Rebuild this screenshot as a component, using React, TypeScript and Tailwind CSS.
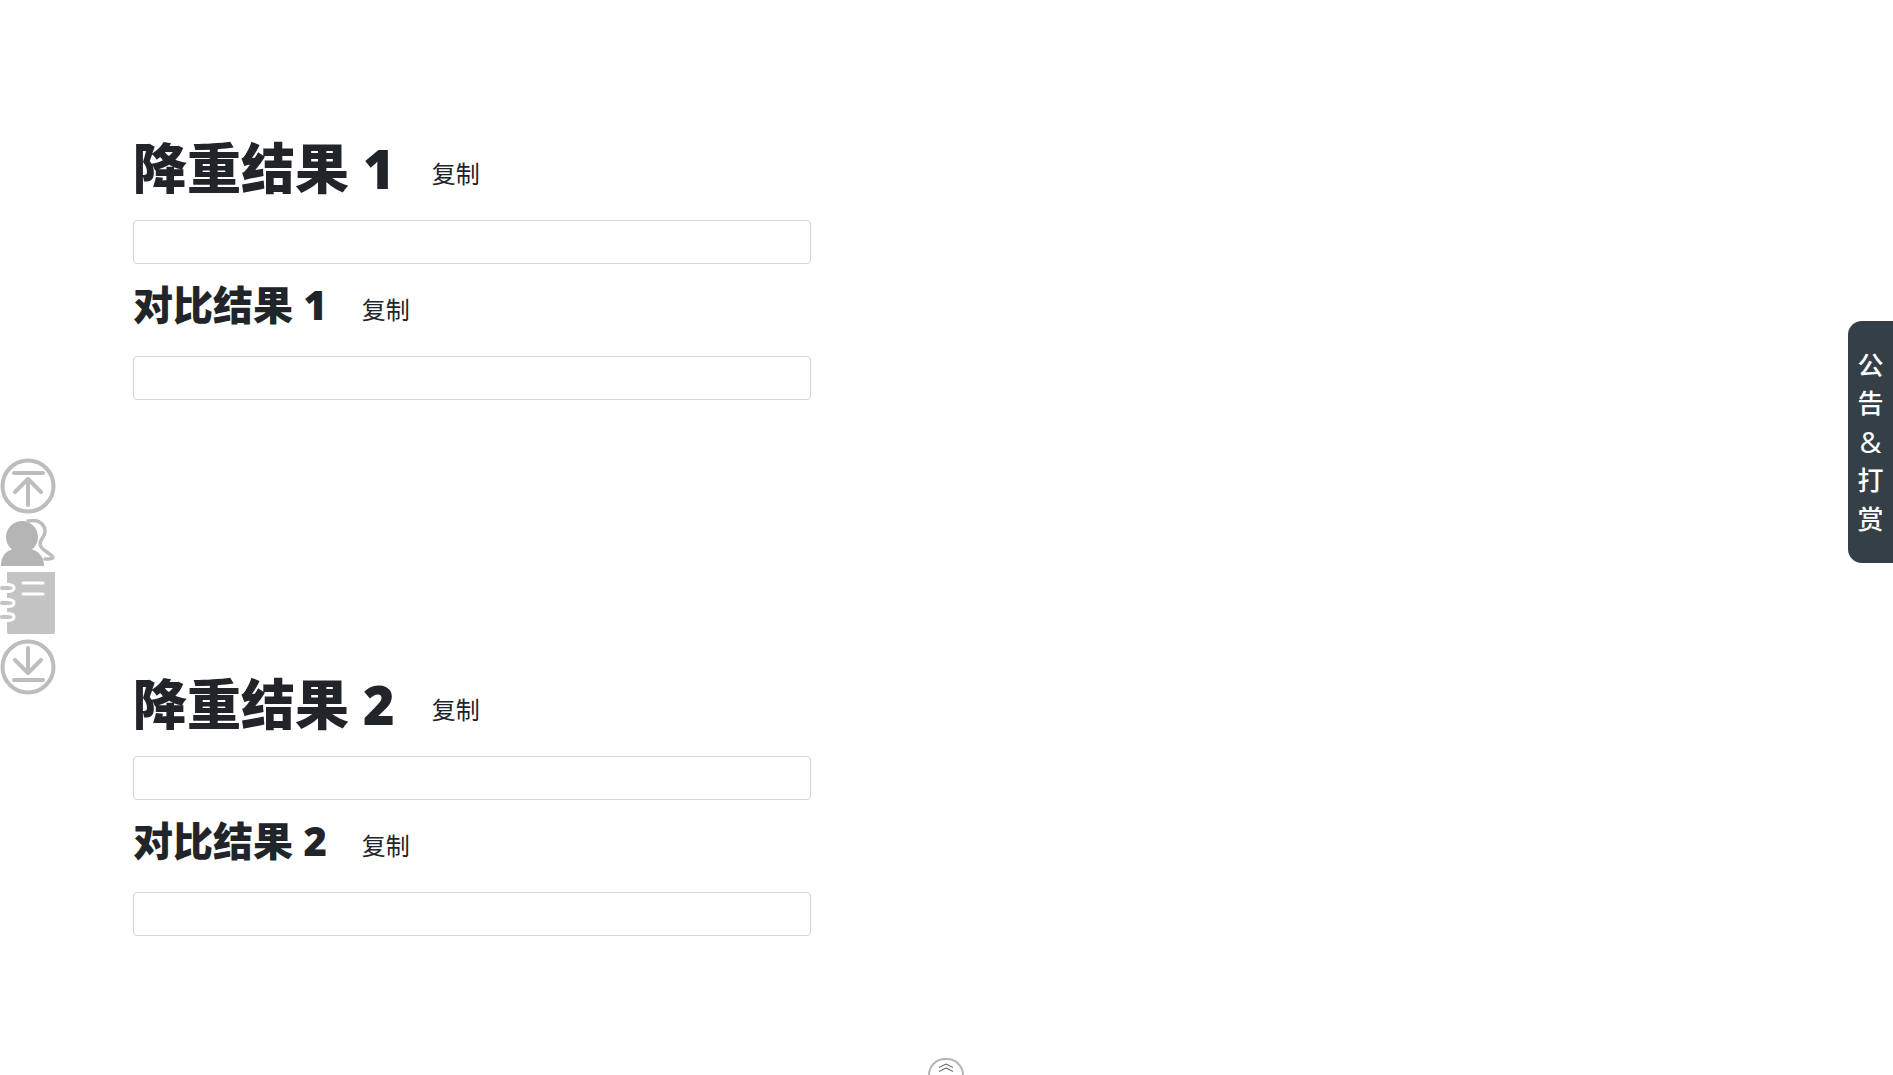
const cjk = { fontFamily: '"Open Sans", "Noto Sans CJK SC", sans-serif' }

function ResultBlock({ n }: { n: number }) {
  return (
    <section className="h-[536px] pt-[130px]">
      <div className="flex h-[72px] items-center">
        <h1 className="mt-[3px] text-[54px] leading-[72px] font-black">
          降重结果 <span className="font-extrabold">{n}</span>
        </h1>
        <button className="ml-[37px] mt-[15px] text-2xl leading-[36px]">复制</button>
      </div>
      <input className="mt-[18px] block h-[44px] w-[678px] rounded border border-[#ced4da] bg-white" />
      <div className="mt-[10px] flex h-[60px] items-center">
        <h2 className="mt-[2px] text-[40px] leading-[60px] font-black">
          对比结果 <span className="font-extrabold">{n}</span>
        </h2>
        <button className="ml-[35px] mt-[12px] text-2xl leading-[36px]">复制</button>
      </div>
      <input className="mt-[22px] block h-[44px] w-[678px] rounded border border-[#ced4da] bg-white" />
    </section>
  )
}

function SideTools() {
  return (
    <div className="fixed left-0 top-[458px] flex w-[56px] flex-col items-center">
      <svg viewBox="0 0 56 56" className="h-[56px] w-[56px]" fill="none" stroke="#bdbdbd" strokeWidth="4" strokeLinecap="round" strokeLinejoin="round">
        <circle cx="28" cy="28" r="25.5" />
        <path d="M14 15h29M28 47V21M15 34l13-13 13 13" />
      </svg>
      <svg viewBox="0 0 56 48" className="mt-[5px] h-[48px] w-[56px]">
        <circle cx="22" cy="18" r="16" fill="#b5b5b5" />
        <path d="M1 47c0-11 6-18 21-18s22 7 22 18z" fill="#b5b5b5" />
        <path d="M28 2c9-2 16 2 17 9 1 6-5 9-5 14 0 5 8 8 12 12 2 2 1 3-7 3" fill="none" stroke="#bdbdbd" strokeWidth="3.5" strokeLinecap="round" />
      </svg>
      <svg viewBox="0 0 56 62" className="mt-[5px] h-[62px] w-[56px]">
        <path d="M7 0h48v60a2 2 0 0 1-2 2H9a2 2 0 0 1-2-2z" fill="#c4c4c4" />
        <path d="M23 11h20M23 22h20" stroke="#fff" strokeWidth="3" strokeLinecap="round" />
        <path d="M2 16h5M2 31h5M2 45h5" stroke="#c4c4c4" strokeWidth="4" strokeLinecap="round" />
        <path d="M7 12.500c4 0 7 1 7 3.500s-3 3.500-7 3.500M7 27.500c4 0 7 1 7 3.500s-3 3.500-7 3.500M7 41.500c4 0 7 1 7 3.500s-3 3.500-7 3.500" fill="none" stroke="#fff" strokeWidth="3" />
      </svg>
      <svg viewBox="0 0 56 56" className="mt-[5px] h-[56px] w-[56px]" fill="none" stroke="#bdbdbd" strokeWidth="4" strokeLinecap="round" strokeLinejoin="round">
        <circle cx="28" cy="28" r="25.500" />
        <path d="M14 41h29M28 9v25M15 21l13 13 13-13" />
      </svg>
    </div>
  )
}

export default function App() {
  return (
    <div className="min-h-[1075px] overflow-hidden bg-white pl-[133px] text-[#212529]" style={cjk}>
      <ResultBlock n={1} />
      <ResultBlock n={2} />
      <SideTools />

      {/* notice tab */}
      <div className="fixed right-0 top-[321px] flex h-[242px] w-[45px] flex-col items-center justify-center rounded-l-[14px] bg-[#343f48] text-center text-[26px] leading-[38.4px] font-medium text-white">
        <span>公</span>
        <span>告</span>
        <span className="text-[30px]">&amp;</span>
        <span>打</span>
        <span>赏</span>
      </div>

      {/* bottom handle */}
      <div className="fixed bottom-0 left-[928px] flex h-[17px] w-[36px] justify-center rounded-t-[18px] border-2 border-b-0 border-[#b5b5b5] bg-white pt-[3px]">
        <svg viewBox="0 0 18 9" className="h-[9px] w-[18px]" fill="none" stroke="#555" strokeWidth="1">
          <path d="M2 4.500 9 1l7 3.500M2 8.500 9 5l7 3.500" />
        </svg>
      </div>
    </div>
  )
}
